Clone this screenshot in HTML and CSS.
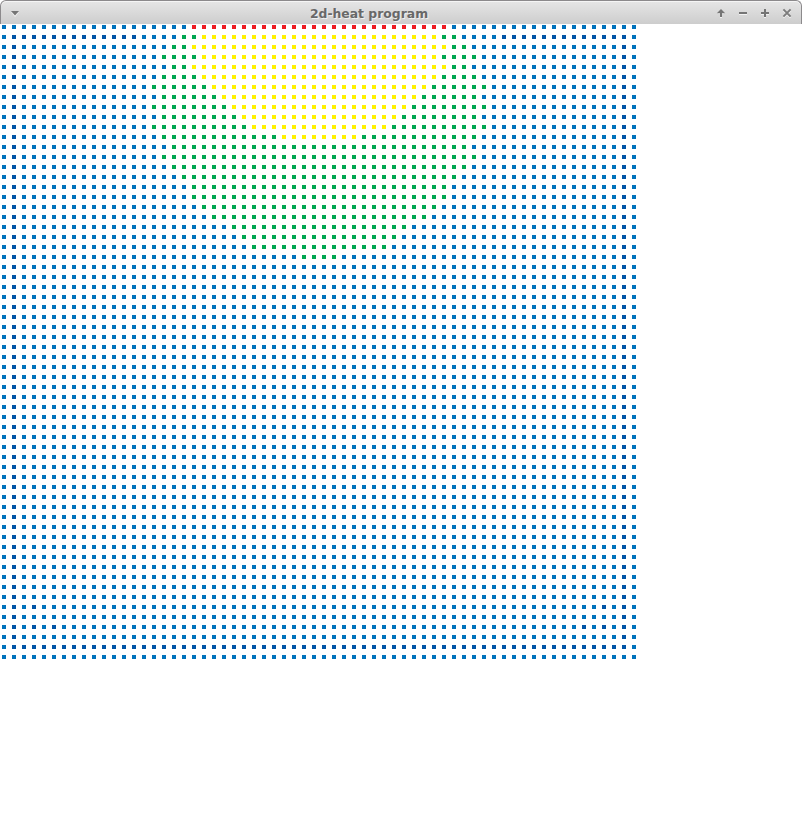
FILE: index.html
```html
<!DOCTYPE html>
<html lang="en">
<head>
<meta charset="utf-8">
<title>2d-heat program</title>
<link rel="stylesheet" href="styles.css">
</head>
<body>
<div class="window">
  <header class="titlebar">
    <svg class="icon menu" width="10" height="7" viewBox="0 0 10 7"><path class="shine" d="M1 2h8l-4 5z"/><path class="ink" d="M1 1h8l-4 4.6z"/></svg>
    <h1 class="title">2d-heat program</h1>
    <div class="controls">
      <svg class="icon" width="10" height="10" viewBox="0 0 10 10"><path class="shine" d="M5 2l4 4h-3v4h-2v-4h-3z"/><path class="ink" d="M5 1l4.2 4.2h-3.2v3.8h-2v-3.8h-3.2z"/></svg>
      <svg class="icon" width="10" height="10" viewBox="0 0 10 10"><path class="shine" d="M1 5h8v2h-8z"/><path class="ink" d="M1 4h8v2h-8z"/></svg>
      <svg class="icon" width="10" height="10" viewBox="0 0 10 10"><path class="shine" d="M4 2h2v3h3v2h-3v3h-2v-3h-3v-2h3z"/><path class="ink" d="M4 1h2v3h3v2h-3v3h-2v-3h-3v-2h3z"/></svg>
      <svg class="icon" width="10" height="10" viewBox="0 0 10 10"><path class="shine-line" d="M1.4 2.4l7.2 7.2M8.6 2.4l-7.2 7.2"/><path class="ink-line" d="M1.4 1.4l7.2 7.2M8.6 1.4l-7.2 7.2"/></svg>
    </div>
  </header>
  <main class="plate" id="plate"></main>
</div>
<script src="heat.js"></script>
</body>
</html>
```
FILE: styles.css
```css
body {
  margin: 0;
  background: #fff;
}

.window {
  width: 802px;
  height: 825px;
  overflow: hidden;
}

.titlebar {
  box-sizing: border-box;
  display: grid;
  grid-template-columns: 24px 1fr 92px;
  align-items: center;
  height: 24px;
  padding: 1px 4px 0 8px;
  border: 1px solid #8c8a8c;
  border-bottom: 0;
  border-radius: 6px 6px 0 0;
  background: linear-gradient(#e6e6e6, #cdcdcd);
  box-shadow: inset 0 1px #f5f5f5;
}

.title {
  margin: 0;
  padding-top: 1px;
  font: bold 12.4px/20px "DejaVu Sans", sans-serif;
  text-align: center;
  color: #686868;
  text-shadow: 1px 1px #f0f0f0;
}

.controls {
  display: flex;
  justify-content: flex-end;
  gap: 12px;
  padding-right: 5px;
}

.icon {
  display: block;
}

.menu {
  margin: 1px 0 0 1px;
}

.ink {
  fill: #757575;
}

.shine {
  fill: #f2f2f2;
}

.ink-line,
.shine-line {
  fill: none;
  stroke: #7c7c7c;
  stroke-width: 2;
}

.shine-line {
  stroke: #f2f2f2;
}

.plate {
  display: grid;
  grid-template-columns: repeat(64, 4px);
  grid-auto-rows: 4px;
  gap: 6px;
  padding: 1px 0 0 2px;
}

.cell {
  background: #0072bc;
}

.cold {
  background: #0054a6;
}

.warm {
  background: #00a651;
}

.hot {
  background: #fff200;
}

.source {
  background: #ed1c24;
}
```
FILE: heat.js
```js
const SIZE = 64;

// Inclusive column ranges, indexed by row.
const warm = [
  null, [18, 45], [17, 46], [16, 47], [17, 46], [16, 47], [15, 48], [16, 47],
  [15, 48], [16, 47], [15, 48], [16, 47], [17, 46], [16, 47], [17, 46],
  [18, 45], [19, 44], [19, 44], [20, 43], [21, 42], [23, 40], [24, 39],
  [25, 38], [30, 33]
];
const hot = [
  null, [20, 43], [19, 44], [20, 43], [19, 44], [20, 43], [21, 42], [22, 41],
  [23, 40], [24, 39], [25, 38], [28, 35]
];

const within = (range, col) => range && col >= range[0] && col <= range[1];

function isCold(row, col) {
  const last = SIZE - 2;
  if (row < 1 || row > last || col < 1 || col > last) return false;
  if (col === 1 || col === last || row === last) return true;
  const edge = Math.min(col, SIZE - 1 - col);
  if (row === 1) return edge <= 13;
  return (row === 58 && edge === 3) || (row === 60 && (edge === 3 || edge === 5));
}

function level(row, col) {
  if (row === 0 && within([19, 44], col)) return "source";
  if (within(hot[row], col)) return "hot";
  if (within(warm[row], col)) return "warm";
  return isCold(row, col) ? "cold" : "";
}

const plate = document.getElementById("plate");
for (let row = 0; row < SIZE; row++) {
  for (let col = 0; col < SIZE; col++) {
    const cell = document.createElement("i");
    cell.className = ("cell " + level(row, col)).trim();
    plate.append(cell);
  }
}
```
